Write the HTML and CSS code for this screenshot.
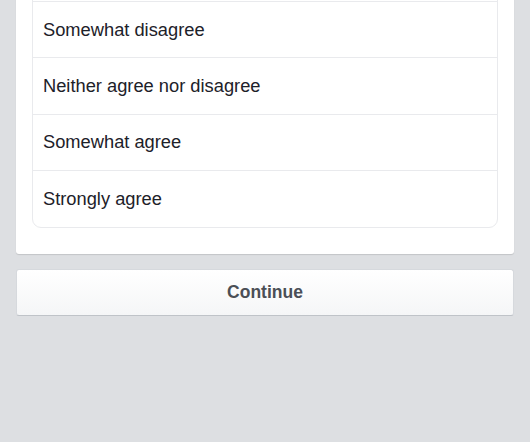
FILE: index.html
```html
<!DOCTYPE html>
<html>
<head>
<meta charset="utf-8">
<link rel="stylesheet" href="styles.css">
</head>
<body>
<div class="page">
  <div class="card">
    <ul class="options">
      <li class="option">Somewhat disagree</li>
      <li class="option">Neither agree nor disagree</li>
      <li class="option">Somewhat agree</li>
      <li class="option">Strongly agree</li>
    </ul>
  </div>
  <button class="continue">Continue</button>
</div>
</body>
</html>
```
FILE: styles.css
```css
html, body {
  margin: 0;
  padding: 0;
  background: #dddfe2;
  height: 100%;
  overflow: hidden;
}
.page {
  display: flex;
  flex-direction: column;
  gap: 15px;
  padding: 0 16px;
  font-family: "Liberation Sans", Arial, sans-serif;
}
.card {
  margin-top: -40px;
  background: #fff;
  border-radius: 0 0 3px 3px;
  box-shadow: 0 1px 1px rgba(0,0,0,0.12);
  padding: 16px 16px 26px;
}
.options {
  list-style: none;
  margin: 0;
  padding: 24px 0 0;
  border: 1px solid #e9eaed;
  border-radius: 9px;
}
.option {
  height: 55.4px;
  display: flex;
  align-items: center;
  padding-left: 10px;
  font-size: 18.3px;
  color: #1d2129;
  border-top: 1px solid #e9eaed;
}
.continue {
  height: 47px;
  border: 1px solid #d6d9dd;
  border-bottom-color: #bfc3c8;
  border-radius: 3px;
  background: linear-gradient(#ffffff, #f5f6f7);
  font-family: "Liberation Sans", Arial, sans-serif;
  font-weight: bold;
  font-size: 17.5px;
  color: #4b4f56;
  padding: 0;
}
```
